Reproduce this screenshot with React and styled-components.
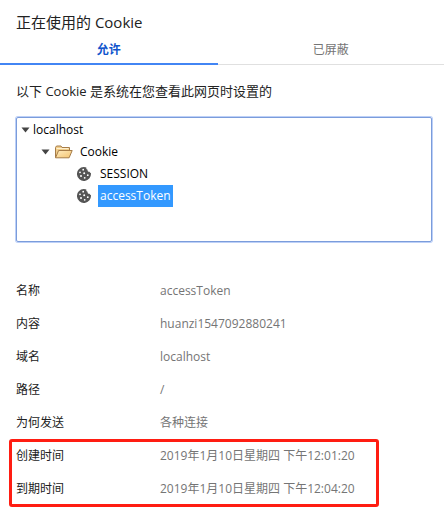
import React, { useState } from "react";
import styled, { createGlobalStyle } from "styled-components";

const GlobalStyle = createGlobalStyle`
  * {
    box-sizing: border-box;
  }

  body {
    margin: 0;
    background: #fff;
    color: #222;
    font-family: "Open Sans", "Noto Sans CJK SC", sans-serif;
    font-size: 12px;
  }
`;

const Title = styled.h1`
  margin: 0;
  padding: 10px 16px 1px;
  font-size: 15px;
  font-weight: 400;
  line-height: 24px;
`;

const TabList = styled.div`
  display: grid;
  grid-template-columns: 49fr 51fr;
  border-bottom: 1px solid #e0e0e0;
`;

const Tab = styled.button`
  height: 30px;
  margin-bottom: -1px;
  padding: 2px 0 0;
  border: 0;
  border-bottom: 2px solid ${(props) => (props.$active ? "#4285f4" : "transparent")};
  background: none;
  color: ${(props) => (props.$active ? "#1155cc" : "#757575")};
  font-family: inherit;
  font-size: 12px;
  font-weight: ${(props) => (props.$active ? 700 : 400)};
  line-height: 24px;
`;

const Content = styled.main`
  padding: 14px 12px 16px 16px;
`;

const Intro = styled.p`
  margin: 0 0 14px;
  font-size: 13px;
  line-height: 24px;
`;

const Tree = styled.ul`
  height: 125px;
  margin: 0 0 32px;
  padding: 1px 0 0 4px;
  overflow: auto;
  border: 1px solid #7b9cdb;
  border-radius: 2px;
  box-shadow: 0 0 0 1px #bdd0f7;
  color: #000;
  list-style: none;
`;

const Branch = styled.ul`
  margin: 0;
  padding: 0 0 0 20px;
  list-style: none;
`;

const TreeRow = styled.div`
  display: flex;
  align-items: center;
  height: 22px;
`;

const ArrowSlot = styled.span`
  display: flex;
  width: 10px;
`;

const IconSlot = styled.span`
  display: flex;
  justify-content: center;
  width: 27px;
  padding-right: 2px;
`;

const NodeLabel = styled.button`
  height: 22px;
  padding: 0 2px;
  border: 0;
  background: ${(props) => (props.$selected ? "#3399ff" : "none")};
  color: ${(props) => (props.$selected ? "#fff" : "#000")};
  font-family: inherit;
  font-size: 12px;
  line-height: 22px;
`;

const Details = styled.dl`
  position: relative;
  width: fit-content;
  margin: 0;
`;

// Red frame drawn around the time rows
const MarkedDetails = styled(Details)`
  &::after {
    content: "";
    position: absolute;
    inset: 0 -24px -2px -7px;
    border: 3px solid #ff1d12;
    border-radius: 3px;
    pointer-events: none;
  }
`;

const DetailRow = styled.div`
  display: grid;
  grid-template-columns: 144px auto;
  line-height: 33px;
`;

const DetailName = styled.dt`
  color: #222;
`;

const DetailValue = styled.dd`
  margin: 0;
  color: #757575;
`;

const Arrow = () => (
  <svg width="9" height="6" viewBox="0 0 9 6" aria-hidden="true">
    <path d="M0.5 0.5h8L4.5 5.5z" fill="#444" />
  </svg>
);

const FolderIcon = () => (
  <svg width="19" height="14" viewBox="0 0 19 14" aria-hidden="true">
    <defs>
      <linearGradient id="folderFront" x1="0" y1="0" x2="1" y2="1">
        <stop offset="0" stopColor="#ffedc2" />
        <stop offset="1" stopColor="#f3c36f" />
      </linearGradient>
    </defs>
    <path
      d="M1.5 12.5v-10l1-1.5h4.5l1 1.5h7.5v3"
      fill="#f0cd8b"
      stroke="#a67c48"
      strokeLinejoin="round"
    />
    <path d="M2.5 3.5h12" stroke="#fff0ce" />
    <path
      d="M1.5 12.8L4.6 5.5h13.6l-3.1 7.3z"
      fill="url(#folderFront)"
      stroke="#a67c48"
      strokeLinejoin="round"
    />
  </svg>
);

const CookieIcon = () => (
  <svg width="14" height="14" viewBox="0 0 14 14" aria-hidden="true">
    <path
      d="M6.8 0C8 0 8.9.2 9.4.6c-.3 1.2.2 2 1.2 2.2-.2 1.3.8 2.2 2 1.9.3.8.7 1.2 1.3 1.3A7 7 0 1 1 6.8 0z"
      fill="#555"
    />
    <g fill="#fff">
      <circle cx="6.2" cy="2.7" r="0.9" />
      <circle cx="3" cy="5.3" r="0.9" />
      <circle cx="7.2" cy="6.2" r="1" />
      <circle cx="4" cy="9" r="1" />
      <circle cx="7.7" cy="10.8" r="0.9" />
      <circle cx="10.8" cy="8.2" r="0.9" />
    </g>
  </svg>
);

const cookies = ["SESSION", "accessToken"];

const details = [
  { name: "名称", value: "accessToken" },
  { name: "内容", value: "huanzi1547092880241" },
  { name: "域名", value: "localhost" },
  { name: "路径", value: "/" },
  { name: "为何发送", value: "各种连接" },
];

const times = [
  { name: "创建时间", value: "2019年1月10日星期四 下午12:01:20" },
  { name: "到期时间", value: "2019年1月10日星期四 下午12:04:20" },
];

const renderRow = ({ name, value }) => (
  <DetailRow key={name}>
    <DetailName>{name}</DetailName>
    <DetailValue>{value}</DetailValue>
  </DetailRow>
);

const App = () => {
  const [tab, setTab] = useState("allowed");
  const [selected, setSelected] = useState("accessToken");

  return (
    <>
      <GlobalStyle />
      <Title>正在使用的 Cookie</Title>
      <TabList role="tablist">
        <Tab
          role="tab"
          aria-selected={tab === "allowed"}
          $active={tab === "allowed"}
          onClick={() => setTab("allowed")}
        >
          允许
        </Tab>
        <Tab
          role="tab"
          aria-selected={tab === "blocked"}
          $active={tab === "blocked"}
          onClick={() => setTab("blocked")}
        >
          已屏蔽
        </Tab>
      </TabList>
      <Content>
        <Intro>以下 Cookie 是系统在您查看此网页时设置的</Intro>
        <Tree>
          <li>
            <TreeRow>
              <ArrowSlot>
                <Arrow />
              </ArrowSlot>
              <NodeLabel>localhost</NodeLabel>
            </TreeRow>
            <Branch>
              <li>
                <TreeRow>
                  <ArrowSlot>
                    <Arrow />
                  </ArrowSlot>
                  <IconSlot>
                    <FolderIcon />
                  </IconSlot>
                  <NodeLabel>Cookie</NodeLabel>
                </TreeRow>
                <Branch>
                  {cookies.map((cookie) => (
                    <li key={cookie}>
                      <TreeRow>
                        <ArrowSlot />
                        <IconSlot>
                          <CookieIcon />
                        </IconSlot>
                        <NodeLabel
                          $selected={cookie === selected}
                          onClick={() => setSelected(cookie)}
                        >
                          {cookie}
                        </NodeLabel>
                      </TreeRow>
                    </li>
                  ))}
                </Branch>
              </li>
            </Branch>
          </li>
        </Tree>
        <Details>{details.map(renderRow)}</Details>
        <MarkedDetails>{times.map(renderRow)}</MarkedDetails>
      </Content>
    </>
  );
};

export default App;
